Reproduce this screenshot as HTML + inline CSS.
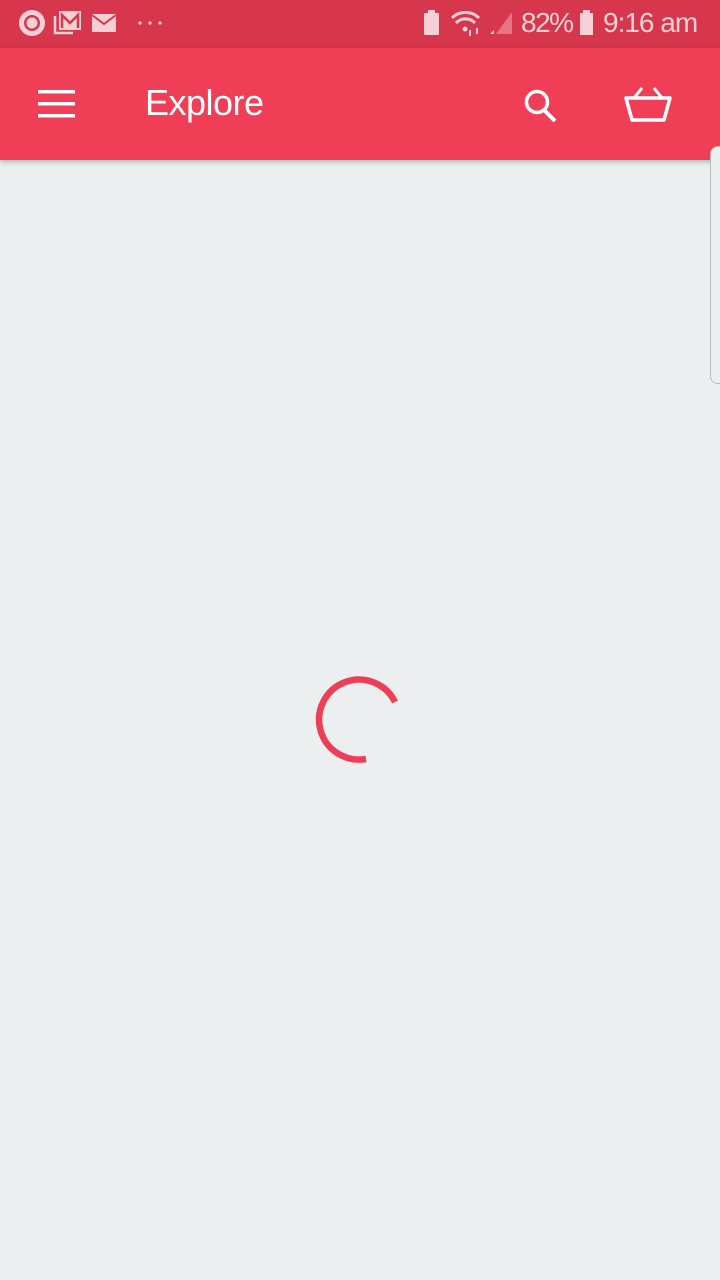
<!DOCTYPE html>
<html><head><meta charset="utf-8"><style>
body{margin:0;width:720px;height:1280px;background:#ebeff0;font-family:"Liberation Sans",sans-serif;position:relative;overflow:hidden}
.sb{position:absolute;top:0;left:0;width:720px;height:48px;background:#d6374c;color:#f6d0d5}
.ab{position:absolute;top:48px;left:0;width:720px;height:112px;background:#ef3e56;box-shadow:0 2px 5px rgba(0,0,0,.25)}
</style></head><body>
<div class="sb">
<svg width="720" height="48" style="position:absolute;left:0;top:0">
<circle cx="32" cy="23" r="13" fill="#f6d0d5"/><circle cx="32" cy="23" r="8" fill="#d6374c"/><circle cx="32" cy="23" r="5.5" fill="#f6d0d5"/>
<path d="M55 16v17h18" fill="none" stroke="#f6d0d5" stroke-width="2.5"/>
<rect x="59" y="11" width="22" height="19" fill="#f6d0d5"/><path d="M62 28V15l8 8 8-8v13" fill="none" stroke="#d6374c" stroke-width="2.5"/>
<rect x="92" y="14" width="24" height="18" fill="#f6d0d5"/><path d="M92 15l12 9 12-9" fill="none" stroke="#d6374c" stroke-width="2"/>
<circle cx="104" cy="23" r="0" fill="none"/>
<circle cx="140" cy="23" r="1.6" fill="#f6d0d5"/><circle cx="150" cy="23" r="1.6" fill="#f6d0d5"/><circle cx="160" cy="23" r="1.6" fill="#f6d0d5"/>
<rect x="424" y="13" width="15" height="22" rx="1" fill="#f6d0d5"/><rect x="428" y="10" width="7" height="4" fill="#f6d0d5"/>
<path d="M452 18a19 19 0 0 1 27 0M456 23a13 13 0 0 1 19 0" fill="none" stroke="#f6d0d5" stroke-width="3"/><circle cx="465" cy="29" r="2.5" fill="#f6d0d5"/>
<path d="M470 30v6M477 34v-6" stroke="#f6d0d5" stroke-width="2"/>
<path d="M496 34L512 12V34Z" fill="#e57584"/><path d="M490 34l4-4v4z" fill="#f6d0d5"/>
<rect x="580" y="13" width="13" height="22" fill="#f6d0d5"/><rect x="583" y="10" width="7" height="4" fill="#f6d0d5"/>
</svg>
<div style="position:absolute;left:521px;top:7px;font-size:28px;letter-spacing:-1.5px">82%</div>
<div style="position:absolute;left:603px;top:7px;font-size:28px;letter-spacing:-1px">9:16 am</div>
</div>
<div class="ab">
<svg width="720" height="112" style="position:absolute;left:0;top:0">
<g fill="#fff"><rect x="38" y="42" width="37" height="3.5"/><rect x="38" y="54" width="37" height="3.5"/><rect x="38" y="66" width="37" height="3.5"/></g>
<circle cx="537" cy="54" r="10.5" fill="none" stroke="#fff" stroke-width="3.5"/><path d="M544 62l11 11" stroke="#fff" stroke-width="4"/>
<path d="M626 50h44l-6 22h-32z" fill="none" stroke="#fff" stroke-width="3.5" stroke-linejoin="round"/><path d="M634 50l8-10M662 50l-8-10" stroke="#fff" stroke-width="3"/>
</svg>
<div style="position:absolute;left:145px;top:34px;font-size:36px;color:#fff;letter-spacing:-0.5px">Explore</div>
</div>
<div style="position:absolute;left:710px;top:146px;width:20px;height:236px;border:1px solid #bbb;border-radius:8px;background:#ebeff0"></div>
<svg width="720" height="1280" style="position:absolute;left:0;top:0">
<path d="M366 759A40 40 0 1 1 395 702" fill="none" stroke="#ee3e56" stroke-width="6.5"/>
</svg>
</body></html>
